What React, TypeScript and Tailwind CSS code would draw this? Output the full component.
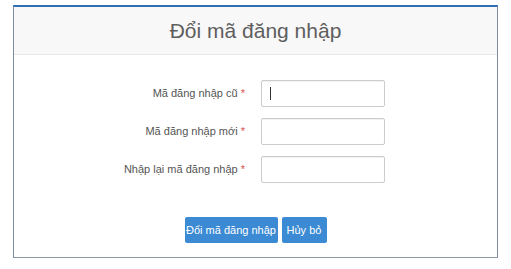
import React from 'react';

const fields = ['Mã đăng nhập cũ', 'Mã đăng nhập mới', 'Nhập lại mã đăng nhập'];

export default function App() {
  return (
    <div className="w-[511px] h-[269px] bg-white pt-[5px] px-[13px] font-['Liberation_Sans',Arial,sans-serif]">
      <div className="h-[253px] flex flex-col border-x border-b border-x-[#7d8ea3] border-b-[#8c96a3] border-t-2 border-t-[#2f6fb6] bg-white">
        <div className="h-[48px] flex items-center justify-center bg-[#f8f8f8] border-b border-[#e8e8e8]">
          <h1 className="text-[21px] text-[#5e5e5e] leading-none">Đổi mã đăng nhập</h1>
        </div>

        <div className="flex flex-col gap-[11px] pt-[25px]">
          {fields.map((label, i) => (
            <div key={label} className="flex items-center">
              <label className="w-[233px] pr-[2px] text-right text-[11px] text-[#555]">
                {label} <span className="text-[#d9534f]">*</span>
              </label>
              <div className="ml-[14px] w-[124px] h-[27px] border border-[#ccc] rounded-[2px] bg-white flex items-center px-[8px] shadow-[inset_0_1px_1px_rgba(0,0,0,0.06)]">
                {i === 0 && <span className="w-px h-[13px] bg-[#333]" />}
              </div>
            </div>
          ))}
        </div>

        <div className="flex justify-center gap-[4px] mt-[34px]">
          <button className="h-[26px] w-[93px] whitespace-nowrap rounded-[2px] bg-[#3b8ad3] text-white text-[11px]">
            Đổi mã đăng nhập
          </button>
          <button className="h-[26px] w-[45px] whitespace-nowrap rounded-[2px] bg-[#3b8ad3] text-white text-[11px]">
            Hủy bỏ
          </button>
        </div>
      </div>
    </div>
  );
}
